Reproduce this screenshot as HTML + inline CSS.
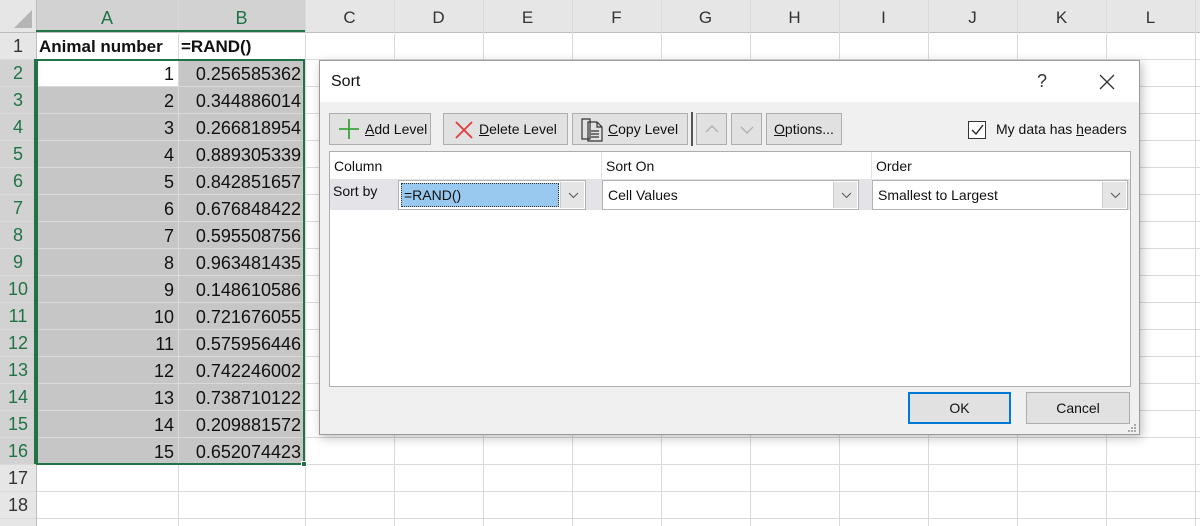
<!DOCTYPE html>
<html><head><meta charset="utf-8"><style>
*{margin:0;padding:0;box-sizing:border-box}
body{width:1200px;height:526px;overflow:hidden;background:#fff;font-family:"Liberation Sans",sans-serif;position:relative}
.a{position:absolute}
.hl{position:absolute;left:0;width:1200px;height:1px;background:#dadada}
.vl{position:absolute;top:0;width:1px;height:526px;background:#dadada}
.ch{position:absolute;top:0;height:32px;line-height:36px;text-align:center;font-size:17px;color:#333}
.rh{position:absolute;left:0;width:36px;height:27px;line-height:28px;text-align:center;font-size:18px;color:#333}
.cell{position:absolute;height:26px;line-height:28px;font-size:18px;color:#111;text-align:right;padding-right:4px}
.btn{position:absolute;height:32px;border:1px solid #adadad;background:#e1e1e1;font-size:14px;line-height:30px;color:#111}
.dd{position:absolute;height:30px;border:1px solid #b3b3b3;background:#fff;font-size:14px;line-height:28px;padding-left:5px;color:#111}
.arr{position:absolute;right:1px;top:1px;width:24px;height:26px;background:#e5e5e5;border-left:1px solid #ccc}
</style></head><body>
<div class="a" style="left:0;top:0;width:1200px;height:32px;background:#e6e6e6"></div>
<div class="a" style="left:0;top:32px;width:36px;height:494px;background:#e6e6e6"></div>
<div class="a" style="left:36px;top:0;width:269px;height:32px;background:#d2d2d2"></div>
<div class="a" style="left:0;top:59px;width:36px;height:405px;background:#d2d2d2"></div>
<div class="a" style="left:36px;top:59px;width:269px;height:405px;background:#c6c6c6"></div>
<div class="a" style="left:36px;top:59px;width:142px;height:27px;background:#fff"></div>
<div class="hl" style="top:32px;background:#bdbdbd"></div>
<div class="hl" style="top:59px"></div><div class="hl" style="top:86px"></div><div class="hl" style="top:113px"></div><div class="hl" style="top:140px"></div><div class="hl" style="top:167px"></div><div class="hl" style="top:194px"></div><div class="hl" style="top:221px"></div><div class="hl" style="top:248px"></div><div class="hl" style="top:275px"></div><div class="hl" style="top:302px"></div><div class="hl" style="top:329px"></div><div class="hl" style="top:356px"></div><div class="hl" style="top:383px"></div><div class="hl" style="top:410px"></div><div class="hl" style="top:437px"></div><div class="hl" style="top:464px"></div><div class="hl" style="top:491px"></div><div class="hl" style="top:518px"></div>
<div class="vl" style="left:36px;background:#bdbdbd"></div><div class="vl" style="left:178px"></div><div class="vl" style="left:305px"></div><div class="vl" style="left:394px"></div><div class="vl" style="left:483px"></div><div class="vl" style="left:572px"></div><div class="vl" style="left:661px"></div><div class="vl" style="left:750px"></div><div class="vl" style="left:839px"></div><div class="vl" style="left:928px"></div><div class="vl" style="left:1017px"></div><div class="vl" style="left:1106px"></div><div class="vl" style="left:1195px"></div>
<svg class="a" style="left:12px;top:8px" width="22" height="22"><polygon points="20,2 20,20 2,20" fill="#b5b5b5"/></svg>
<div class="ch" style="left:36px;width:142px;color:#217346;font-size:18px">A</div>
<div class="ch" style="left:178px;width:127px;color:#217346;font-size:18px">B</div>
<div class="ch" style="left:305px;width:89px">C</div><div class="ch" style="left:394px;width:89px">D</div><div class="ch" style="left:483px;width:89px">E</div><div class="ch" style="left:572px;width:89px">F</div><div class="ch" style="left:661px;width:89px">G</div><div class="ch" style="left:750px;width:89px">H</div><div class="ch" style="left:839px;width:89px">I</div><div class="ch" style="left:928px;width:89px">J</div><div class="ch" style="left:1017px;width:89px">K</div><div class="ch" style="left:1106px;width:89px">L</div>
<div class="a" style="left:36px;top:30px;width:269px;height:2px;background:#217346"></div>
<div class="rh" style="top:32px">1</div>
<div class="rh" style="top:59px;color:#217346">2</div><div class="rh" style="top:86px;color:#217346">3</div><div class="rh" style="top:113px;color:#217346">4</div><div class="rh" style="top:140px;color:#217346">5</div><div class="rh" style="top:167px;color:#217346">6</div><div class="rh" style="top:194px;color:#217346">7</div><div class="rh" style="top:221px;color:#217346">8</div><div class="rh" style="top:248px;color:#217346">9</div><div class="rh" style="top:275px;color:#217346">10</div><div class="rh" style="top:302px;color:#217346">11</div><div class="rh" style="top:329px;color:#217346">12</div><div class="rh" style="top:356px;color:#217346">13</div><div class="rh" style="top:383px;color:#217346">14</div><div class="rh" style="top:410px;color:#217346">15</div><div class="rh" style="top:437px;color:#217346">16</div>
<div class="rh" style="top:464px">17</div><div class="rh" style="top:491px">18</div>
<div class="a" style="left:34px;top:59px;width:2px;height:405px;background:#217346"></div>
<div class="cell" style="left:36px;top:33px;width:142px;text-align:left;padding-left:3px;font-weight:bold;font-size:17px">Animal number</div>
<div class="cell" style="left:178px;top:33px;width:127px;text-align:left;padding-left:3px;font-weight:bold;font-size:17px">=RAND()</div>
<div class="cell" style="left:36px;top:60px;width:142px">1</div><div class="cell" style="left:178px;top:60px;width:127px">0.256585362</div>
<div class="cell" style="left:36px;top:87px;width:142px">2</div><div class="cell" style="left:178px;top:87px;width:127px">0.344886014</div>
<div class="cell" style="left:36px;top:114px;width:142px">3</div><div class="cell" style="left:178px;top:114px;width:127px">0.266818954</div>
<div class="cell" style="left:36px;top:141px;width:142px">4</div><div class="cell" style="left:178px;top:141px;width:127px">0.889305339</div>
<div class="cell" style="left:36px;top:168px;width:142px">5</div><div class="cell" style="left:178px;top:168px;width:127px">0.842851657</div>
<div class="cell" style="left:36px;top:195px;width:142px">6</div><div class="cell" style="left:178px;top:195px;width:127px">0.676848422</div>
<div class="cell" style="left:36px;top:222px;width:142px">7</div><div class="cell" style="left:178px;top:222px;width:127px">0.595508756</div>
<div class="cell" style="left:36px;top:249px;width:142px">8</div><div class="cell" style="left:178px;top:249px;width:127px">0.963481435</div>
<div class="cell" style="left:36px;top:276px;width:142px">9</div><div class="cell" style="left:178px;top:276px;width:127px">0.148610586</div>
<div class="cell" style="left:36px;top:303px;width:142px">10</div><div class="cell" style="left:178px;top:303px;width:127px">0.721676055</div>
<div class="cell" style="left:36px;top:330px;width:142px">11</div><div class="cell" style="left:178px;top:330px;width:127px">0.575956446</div>
<div class="cell" style="left:36px;top:357px;width:142px">12</div><div class="cell" style="left:178px;top:357px;width:127px">0.742246002</div>
<div class="cell" style="left:36px;top:384px;width:142px">13</div><div class="cell" style="left:178px;top:384px;width:127px">0.738710122</div>
<div class="cell" style="left:36px;top:411px;width:142px">14</div><div class="cell" style="left:178px;top:411px;width:127px">0.209881572</div>
<div class="cell" style="left:36px;top:438px;width:142px">15</div><div class="cell" style="left:178px;top:438px;width:127px">0.652074423</div>
<div class="a" style="left:36px;top:59px;width:269px;height:406px;border:2px solid #217346"></div>
<div class="a" style="left:301px;top:461px;width:6px;height:6px;background:#217346;border:1px solid #fff"></div>

<div class="a" style="left:319px;top:60px;width:821px;height:375px;background:#f0f0f0;border:1px solid #9a9a9a;box-shadow:2px 3px 10px rgba(0,0,0,0.25)">
 <div class="a" style="left:0;top:0;width:819px;height:41px;background:#fff"></div>
 <div class="a" style="left:11px;top:12px;font-size:16px;color:#111">Sort</div>
 <div class="a" style="left:717px;top:10px;font-size:18px;color:#333">?</div>
 <svg class="a" style="left:779px;top:13px" width="16" height="16"><path d="M1 1L15 15M15 1L1 15" stroke="#333" stroke-width="1.3"/></svg>
 <div class="btn" style="left:9px;top:52px;width:102px;padding-left:35px"><span style="text-decoration:underline">A</span>dd Level
  <svg class="a" style="left:9px;top:5px" width="20" height="20"><path d="M10 0V20M0 10H20" stroke="#3aa53a" stroke-width="1.8"/></svg></div>
 <div class="btn" style="left:123px;top:52px;width:125px;padding-left:35px"><span style="text-decoration:underline">D</span>elete Level
  <svg class="a" style="left:11px;top:7px" width="18" height="18"><path d="M1 1L17 17M17 1L1 17" stroke="#e03c3c" stroke-width="1.8"/></svg></div>
 <div class="btn" style="left:252px;top:52px;width:116px;padding-left:35px"><span style="text-decoration:underline">C</span>opy Level
  <svg class="a" style="left:8px;top:4px" width="26" height="24"><path d="M1 1H9V21H1Z M7 4H16L21 9V23H7Z M16 4V9H21 M10 13H18M10 16H18M10 19H18" fill="none" stroke="#333" stroke-width="1.2"/></svg></div>
 <div class="a" style="left:371px;top:51px;width:2px;height:34px;background:#555"></div>
 <div class="btn" style="left:376px;top:52px;width:31px"><svg class="a" style="left:8px;top:10px" width="14" height="10"><path d="M1 8L7 2L13 8" fill="none" stroke="#b0b0b0" stroke-width="1.3"/></svg></div>
 <div class="btn" style="left:411px;top:52px;width:31px"><svg class="a" style="left:8px;top:11px" width="14" height="10"><path d="M1 2L7 8L13 2" fill="none" stroke="#b0b0b0" stroke-width="1.3"/></svg></div>
 <div class="btn" style="left:446px;top:52px;width:76px;text-align:center"><span style="text-decoration:underline">O</span>ptions...</div>
 <div class="a" style="left:648px;top:60px;width:18px;height:18px;border:1px solid #333;background:#fff">
  <svg class="a" style="left:1px;top:1px" width="14" height="14"><path d="M2 7L6 11L13 2" fill="none" stroke="#222" stroke-width="1.4"/></svg></div>
 <div class="a" style="left:676px;top:60px;font-size:14px;color:#111">My data has <span style="text-decoration:underline">h</span>eaders</div>
 <div class="a" style="left:9px;top:90px;width:802px;height:236px;background:#fff;border:1px solid #adadad">
  <div class="a" style="left:0;top:0;width:800px;height:28px;border-bottom:1px solid #e2e2e2"></div>
  <div class="a" style="left:271px;top:0;width:1px;height:28px;background:#e2e2e2"></div>
  <div class="a" style="left:541px;top:0;width:1px;height:28px;background:#e2e2e2"></div>
  <div class="a" style="left:4px;top:6px;font-size:14px;color:#111">Column</div>
  <div class="a" style="left:276px;top:6px;font-size:14px;color:#111">Sort On</div>
  <div class="a" style="left:546px;top:6px;font-size:14px;color:#111">Order</div>
  <div class="a" style="left:0;top:28px;width:800px;height:30px;background:#e3e3e8"></div>
  <div class="a" style="left:3px;top:31px;font-size:14px;color:#111">Sort by</div>
  <div class="dd" style="left:68px;top:28px;width:188px"><div class="a" style="left:2px;top:2px;width:158px;height:24px;background:#99c9ef;border:1px dotted #333"></div><span style="position:relative">=RAND()</span><div class="arr"><svg class="a" style="left:7px;top:10px" width="11" height="7"><path d="M1 1L5.5 5.5L10 1" fill="none" stroke="#555"/></svg></div></div>
  <div class="dd" style="left:272px;top:28px;width:257px">Cell Values<div class="arr"><svg class="a" style="left:7px;top:10px" width="11" height="7"><path d="M1 1L5.5 5.5L10 1" fill="none" stroke="#555"/></svg></div></div>
  <div class="dd" style="left:542px;top:28px;width:256px">Smallest to Largest<div class="arr"><svg class="a" style="left:7px;top:10px" width="11" height="7"><path d="M1 1L5.5 5.5L10 1" fill="none" stroke="#555"/></svg></div></div>
 </div>
 <div class="btn" style="left:588px;top:331px;width:103px;height:32px;border:2px solid #0078d7;text-align:center;line-height:28px">OK</div>
 <div class="btn" style="left:706px;top:331px;width:104px;height:32px;text-align:center">Cancel</div>
 <svg class="a" style="left:807px;top:362px" width="10" height="10"><g fill="#aaa"><rect x="7" y="1" width="2" height="2"/><rect x="4" y="4" width="2" height="2"/><rect x="7" y="4" width="2" height="2"/><rect x="1" y="7" width="2" height="2"/><rect x="4" y="7" width="2" height="2"/><rect x="7" y="7" width="2" height="2"/></g></svg>
</div>
</body></html>
